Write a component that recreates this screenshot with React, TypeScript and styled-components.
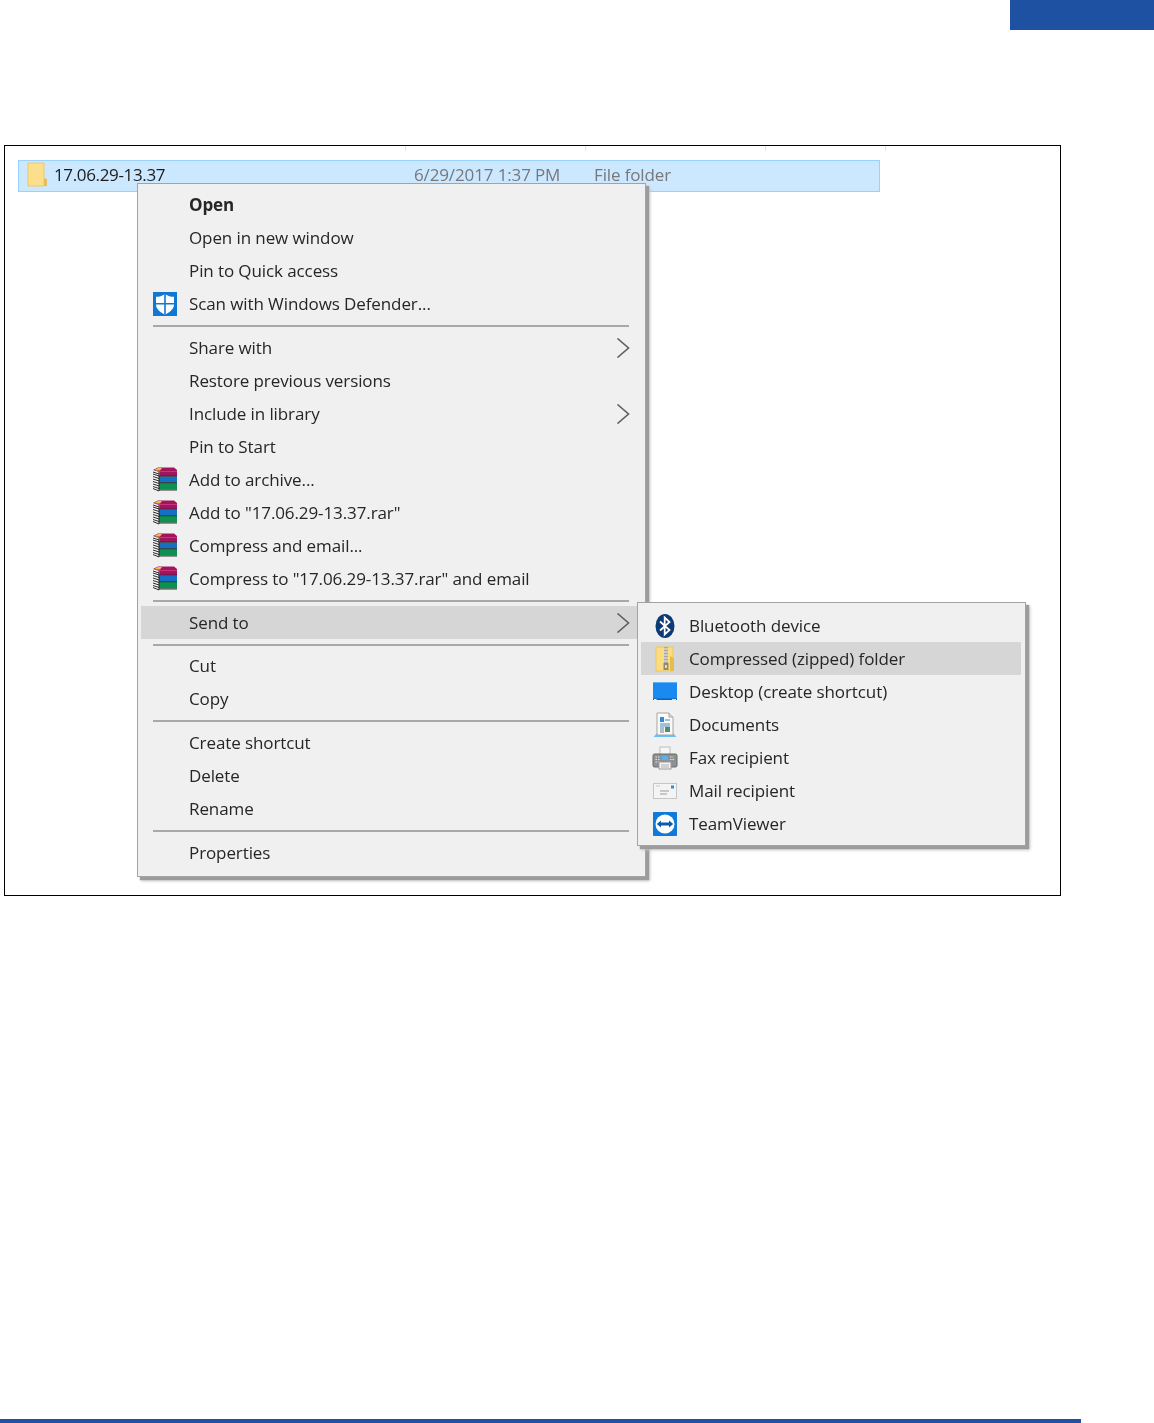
import React from 'react'
import styled, { createGlobalStyle } from 'styled-components'

const GlobalStyle = createGlobalStyle`
  html, body {
    margin: 0;
    padding: 0;
    background: #fff;
  }
  body {
    font-family: "Open Sans", "Noto Sans", "Liberation Sans", sans-serif;
  }
`

const Page = styled.div`
  position: relative;
  width: 1154px;
  height: 1423px;
  overflow: hidden;
  background: #fff;
  display: flex;
  flex-direction: column;
`

const CornerTab = styled.div`
  width: 144px;
  height: 30px;
  margin-left: auto;
  background: #1f51a3;
  flex: none;
`

const Shot = styled.div`
  position: relative;
  flex: none;
  box-sizing: border-box;
  width: 1057px;
  height: 751px;
  margin: 115px 0 0 4px;
  padding: 14px 0 0 13px;
  border: 1px solid #000;
  background: #fff;
`

const ColumnTick = styled.i<{ $left: number }>`
  position: absolute;
  top: 0;
  left: ${({ $left }) => $left}px;
  width: 1px;
  height: 5px;
  background: #e5e5e5;
`

const FileRow = styled.div`
  box-sizing: border-box;
  width: 862px;
  height: 32px;
  display: flex;
  align-items: center;
  padding: 0 0 3px 8px;
  background: #cce8ff;
  border: 1px solid #99d1ff;
  font-size: 17px;
  color: #1c1c1c;
  filter: blur(0.3px);
`

const FileName = styled.span`
  width: 360px;
  margin-left: 7px;
  letter-spacing: -0.35px;
`

const FileMeta = styled.span<{ $w: number }>`
  width: ${({ $w }) => $w}px;
  color: #77777c;
  letter-spacing: -0.13px;
`

const Menu = styled.div<{ $left: number; $top: number; $width: number }>`
  position: absolute;
  left: ${({ $left }) => $left}px;
  top: ${({ $top }) => $top}px;
  width: ${({ $width }) => $width}px;
  box-sizing: border-box;
  padding: 4px 3px 7px 3px;
  background: #f0f0f0;
  border: 1px solid #a3a3a3;
  box-shadow: 3px 3px 1px #9c9c9c, 4px 4px 3px #c4c4c4;
`

const SubMenu = styled(Menu)`
  padding: 6px 4px 5px 3px;
`

const Item = styled.div<{ $hover?: boolean; $bold?: boolean }>`
  position: relative;
  height: 33px;
  display: flex;
  align-items: center;
  padding-left: 48px;
  background: ${({ $hover }) => ($hover ? '#d6d6d6' : 'transparent')};
  font-size: 17px;
  letter-spacing: -0.1px;
  font-weight: ${({ $bold }) => ($bold ? 700 : 400)};
  color: #262626;
`

const ItemText = styled.span`
  filter: blur(0.3px);
  white-space: pre;
`

const IconSlot = styled.span`
  position: absolute;
  left: 11px;
  top: 4px;
  width: 26px;
  height: 26px;
  filter: blur(0.3px);
`

const ChevronSlot = styled.span`
  position: absolute;
  right: 11px;
  top: 7px;
  width: 16px;
  height: 20px;
`

const Separator = styled.div<{ $tight?: boolean }>`
  height: 2px;
  margin: 5px 13px ${({ $tight }) => ($tight ? 3 : 4)}px 12px;
  background: #a8a8a8;
`

const Chevron = () => (
  <ChevronSlot>
    <svg width="16" height="20" viewBox="0 0 16 20">
      <path d="M2.5 0.5 L13.5 10 L2.5 19.5" fill="none" stroke="#5f5f5f" strokeWidth="1.6" />
    </svg>
  </ChevronSlot>
)

const Defender = () => (
  <svg width="26" height="26" viewBox="0 0 26 26">
    <rect x="1" y="1" width="24" height="24" fill="#0f78d4" />
    <path d="M13 3 C10 5 7.5 5.8 4 5.8 V13.5 C4 18 8.5 21.5 13 23.5 C17.5 21.5 22 18 22 13.5 V5.8 C18.5 5.8 16 5 13 3 Z" fill="#fff" />
    <path d="M12.2 3 H13.8 V23.5 H12.2 Z M4 12 H22 V13.6 H4 Z" fill="#0f78d4" />
  </svg>
)

const Rar = () => (
  <svg width="26" height="26" viewBox="0 0 26 26">
    <path d="M1 3 L6 0.5 H22 L25 3 V9 H7 L1 6 Z" fill="#a3145f" />
    <path d="M3 2.5 L6 1 H10 L8 3.5 H4 Z" fill="#e3c545" />
    <path d="M6 4 H25 V4.8 H6 Z" fill="#d13a86" />
    <path d="M1 3 L7 5 H7.5 V9 L1 7 Z" fill="#f2f2f2" />
    <path d="M7 9.5 H25 V15.5 H7 Z" fill="#1470c4" />
    <path d="M7 16 H25 V22.5 H7 Z" fill="#0e9050" />
    <path d="M1 8 L7 10 V16 L1 14 Z M1 15 L7 17 V23 L1 21 Z" fill="#f2f2f2" />
    <path d="M1 5 L7 7 M1 7 L7 9 M1 9.5 L7 11.5 M1 12 L7 14 M1 14.5 L7 16.5 M1 17 L7 19 M1 19.5 L7 21.5 M1 21.5 L7 24" stroke="#2b2b2b" strokeWidth="1" />
    <path d="M7 9.2 H25 M7 15.7 H25 M7 23 H25 M7 5 V24" stroke="#1d1d1d" strokeWidth="0.9" />
  </svg>
)

const Bluetooth = () => (
  <svg width="26" height="26" viewBox="0 0 26 26">
    <ellipse cx="13" cy="13" rx="9.5" ry="12" fill="#0b3a75" />
    <path d="M8 8.5 L17.5 17 L12.7 21.5 V4.5 L17.5 9 L8 17.5" fill="none" stroke="#fff" strokeWidth="1.8" />
  </svg>
)

const ZipFolder = () => (
  <svg width="26" height="26" viewBox="0 0 26 26">
    <path d="M4 1 H21 V25 H4 Z" fill="#fbdc80" stroke="#ecc766" />
    <path d="M18 10 L22 12 V25 H18 Z" fill="#e9bc4a" />
    <path d="M12 1 H16 V17 H12 Z" fill="#a8a8a0" />
    <path d="M12 3 H16 M12 6 H16 M12 9 H16 M12 12 H16 M12 15 H16" stroke="#f4f0e0" strokeWidth="1" />
    <path d="M11.5 17 H16.5 V24 H11.5 Z" fill="#8a8a80" />
    <path d="M13 19 H15 V22 H13 Z" fill="#fbdc80" />
  </svg>
)

const DesktopIcon = () => (
  <svg width="26" height="26" viewBox="0 0 26 26">
    <rect x="1" y="3" width="24" height="18" fill="#1b8af0" />
    <rect x="1" y="3" width="24" height="1" fill="#5cb2f8" />
    <rect x="1" y="19.5" width="24" height="1.5" fill="#0b60c0" />
    <rect x="2" y="20" width="2.5" height="1" fill="#e6f3ff" />
    <rect x="20" y="20" width="4" height="1" fill="#bfe0fb" />
  </svg>
)

const DocumentsIcon = () => (
  <svg width="26" height="26" viewBox="0 0 26 26">
    <path d="M1.5 25 L5 21 H21 L24.5 25 Z" fill="#6cc0f4" />
    <path d="M5 1 H17 L21 5 V23 H5 Z" fill="#fafafa" stroke="#a6a6a6" />
    <path d="M17 1 V5 H21" fill="#dcdcdc" stroke="#a6a6a6" />
    <path d="M8 5 H12 V10 H8 Z" fill="#2d8cdc" />
    <path d="M13 8 H18 M8 12 H18 M8 14 H18 M8 16 H12" stroke="#4d86b8" strokeWidth="1" />
    <path d="M13 15 H18 V20 H13 Z" fill="#4b8f6a" />
    <path d="M8 18 H12 M8 20 H12" stroke="#7d7d7d" strokeWidth="1" />
  </svg>
)

const FaxIcon = () => (
  <svg width="26" height="26" viewBox="0 0 26 26">
    <rect x="8" y="2" width="10" height="9" fill="#f6f6f6" stroke="#bdbdbd" />
    <rect x="1" y="9" width="24" height="13" rx="1.5" fill="#8d9094" stroke="#6a6a6a" />
    <rect x="10" y="11" width="6" height="4" fill="#5ab0ee" />
    <path d="M3.5 12 H8 M3.5 14.5 H8 M3.5 17 H8 M18 12 H23 M18 14.5 H23" stroke="#e2e2e2" strokeWidth="1.2" strokeDasharray="1.5 1" />
    <circle cx="22" cy="12" r="1" fill="#69b34c" />
    <rect x="7" y="17" width="12" height="7" fill="#f4f4f4" stroke="#9a9a9a" />
    <path d="M9 20 H17 M9 22 H17" stroke="#adadad" strokeWidth="1" />
  </svg>
)

const MailIcon = () => (
  <svg width="26" height="26" viewBox="0 0 26 26">
    <rect x="1.5" y="5.5" width="23" height="15" fill="#f4f4f4" stroke="#c6c6c6" />
    <rect x="19" y="7.5" width="3" height="3" fill="#2a8ee0" />
    <path d="M8 13 H17 M8 16 H15" stroke="#9a9a9a" strokeWidth="1.2" />
    <path d="M4 8 H8" stroke="#c9c9c9" strokeWidth="1" />
  </svg>
)

const TeamViewer = () => (
  <svg width="26" height="26" viewBox="0 0 26 26">
    <rect x="1" y="1" width="24" height="24" rx="1" fill="#0e7bd8" />
    <circle cx="13" cy="13" r="9.5" fill="#fff" />
    <path d="M4.8 13 L9 9.5 V11.5 H17 V9.5 L21.2 13 L17 16.5 V14.5 H9 V16.5 Z" fill="#0b5cab" />
  </svg>
)

const Folder = () => (
  <svg width="20" height="26" viewBox="0 0 20 26">
    <path d="M1 1 H17 V24 H1 Z" fill="#fcdf8c" stroke="#ecc766" />
    <path d="M17 16 L20 17 V24 H17 Z" fill="#e8bf55" />
  </svg>
)

type Entry = { label: string; icon?: React.ReactNode; arrow?: boolean; bold?: boolean; hover?: boolean }

const mainMenu: Entry[][] = [
  [
    { label: 'Open', bold: true },
    { label: 'Open in new window' },
    { label: 'Pin to Quick access' },
    { label: 'Scan with Windows Defender...', icon: <Defender /> },
  ],
  [
    { label: 'Share with', arrow: true },
    { label: 'Restore previous versions' },
    { label: 'Include in library', arrow: true },
    { label: 'Pin to Start' },
    { label: 'Add to archive...', icon: <Rar /> },
    { label: 'Add to "17.06.29-13.37.rar"', icon: <Rar /> },
    { label: 'Compress and email...', icon: <Rar /> },
    { label: 'Compress to "17.06.29-13.37.rar" and email', icon: <Rar /> },
  ],
  [{ label: 'Send to', arrow: true, hover: true }],
  [{ label: 'Cut' }, { label: 'Copy' }],
  [{ label: 'Create shortcut' }, { label: 'Delete' }, { label: 'Rename' }],
  [{ label: 'Properties' }],
]

const sendTo: Entry[] = [
  { label: 'Bluetooth device', icon: <Bluetooth /> },
  { label: 'Compressed (zipped) folder', icon: <ZipFolder />, hover: true },
  { label: 'Desktop (create shortcut)', icon: <DesktopIcon /> },
  { label: 'Documents', icon: <DocumentsIcon /> },
  { label: 'Fax recipient', icon: <FaxIcon /> },
  { label: 'Mail recipient', icon: <MailIcon /> },
  { label: 'TeamViewer', icon: <TeamViewer /> },
]

const MenuItem = ({ entry }: { entry: Entry }) => (
  <Item $hover={entry.hover} $bold={entry.bold}>
    {entry.icon && <IconSlot>{entry.icon}</IconSlot>}
    <ItemText>{entry.label}</ItemText>
    {entry.arrow && <Chevron />}
  </Item>
)

const BottomRule = styled.div`
  position: absolute;
  left: 0;
  bottom: 0;
  width: 1081px;
  height: 4px;
  background: #1f51a3;
`

export default function App() {
  return (
    <Page>
      <GlobalStyle />
      <CornerTab />
      <Shot>
        {[400, 580, 760, 880].map((left) => (
          <ColumnTick key={left} $left={left} />
        ))}
        <FileRow>
          <Folder />
          <FileName>17.06.29-13.37</FileName>
          <FileMeta $w={180}>6/29/2017 1:37 PM</FileMeta>
          <FileMeta $w={120}>File folder</FileMeta>
        </FileRow>
        <Menu $left={132} $top={37} $width={509}>
          {mainMenu.map((group, i) => (
            <React.Fragment key={i}>
              {i > 0 && <Separator $tight={i === 3} />}
              {group.map((entry) => (
                <MenuItem key={entry.label} entry={entry} />
              ))}
            </React.Fragment>
          ))}
        </Menu>
        <SubMenu $left={632} $top={456} $width={389}>
          {sendTo.map((entry) => (
            <MenuItem key={entry.label} entry={entry} />
          ))}
        </SubMenu>
      </Shot>
      <BottomRule />
    </Page>
  )
}
